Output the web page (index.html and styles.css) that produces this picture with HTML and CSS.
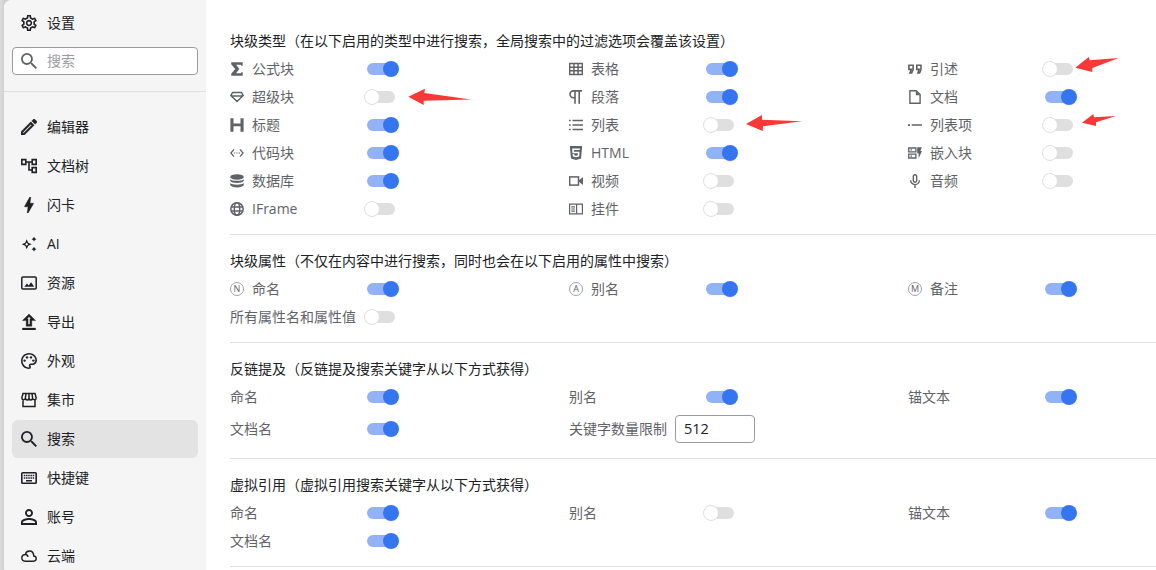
FILE: index.html
```
<!DOCTYPE html>
<html lang="zh-CN">
<head>
<meta charset="utf-8">
<title>设置</title>
<link rel="stylesheet" href="styles.css">
</head>
<body>
<svg class="sprite">
    <symbol id="iconSettings" viewBox="2 2 20 20"><path d="M19.43 12.98c.04-.32.07-.64.07-.98s-.03-.66-.07-.98l2.11-1.65c.19-.15.24-.42.12-.64l-2-3.46c-.09-.16-.26-.25-.44-.25-.06 0-.12.01-.17.03l-2.49 1c-.52-.4-1.08-.73-1.69-.98l-.38-2.65C14.46 2.18 14.25 2 14 2h-4c-.25 0-.46.18-.49.42l-.38 2.65c-.61.25-1.17.59-1.69.98l-2.49-1c-.06-.02-.12-.03-.18-.03-.17 0-.34.09-.43.25l-2 3.46c-.13.22-.07.49.12.64l2.11 1.65c-.04.32-.07.65-.07.98s.03.66.07.98l-2.11 1.65c-.19.15-.24.42-.12.64l2 3.46c.09.16.26.25.44.25.06 0 .12-.01.17-.03l2.49-1c.52.4 1.08.73 1.69.98l.38 2.65c.03.24.24.42.49.42h4c.25 0 .46-.18.49-.42l.38-2.65c.61-.25 1.17-.59 1.69-.98l2.49 1c.06.02.12.03.18.03.17 0 .34-.09.43-.25l2-3.46c.12-.22.07-.49-.12-.64l-2.11-1.65zm-1.98-1.71c.04.31.05.52.05.73 0 .21-.02.43-.05.73l-.14 1.13.89.7 1.08.84-.7 1.21-1.27-.51-1.04-.42-.9.68c-.43.32-.84.56-1.25.73l-1.06.43-.16 1.13-.2 1.35h-1.4l-.19-1.35-.16-1.13-1.06-.43c-.43-.18-.83-.41-1.23-.71l-.91-.7-1.06.43-1.27.51-.7-1.21 1.08-.84.89-.7-.14-1.13c-.03-.31-.05-.54-.05-.74s.02-.43.05-.73l.14-1.13-.89-.7-1.08-.84.7-1.21 1.27.51 1.04.42.9-.68c.43-.32.84-.56 1.25-.73l1.06-.43.16-1.13.2-1.35h1.39l.19 1.35.16 1.13 1.06.43c.43.18.83.41 1.23.71l.91.7 1.06-.43 1.27-.51.7 1.21-1.07.85-.89.7.14 1.13zM12 8c-2.21 0-4 1.79-4 4s1.79 4 4 4 4-1.79 4-4-1.79-4-4-4zm0 6c-1.1 0-2-.9-2-2s.9-2 2-2 2 .9 2 2-.9 2-2 2z"/></symbol>
    <symbol id="iconSearch" viewBox="3 3 17.5 17.5"><path d="M15.5 14h-.79l-.28-.27A6.471 6.471 0 0 0 16 9.5 6.5 6.5 0 1 0 9.5 16c1.61 0 3.09-.59 4.23-1.57l.27.28v.79l5 4.99L20.49 19l-4.99-5zm-6 0C7.01 14 5 11.99 5 9.5S7.01 5 9.5 5 14 7.01 14 9.5 11.99 14 9.5 14z"/></symbol>
    <symbol id="iconEdit" viewBox="3 3 18 18"><path stroke="currentColor" stroke-width=".5" d="M14.06 9.02l.92.92L5.92 19H5v-.92l9.06-9.06M17.66 3c-.25 0-.51.1-.7.29l-1.83 1.83 3.75 3.75 1.83-1.83c.39-.39.39-1.02 0-1.41l-2.34-2.34c-.2-.2-.45-.29-.71-.29zm-3.6 3.19L3 17.25V21h3.75L17.81 9.94l-3.75-3.75z"/></symbol>
    <symbol id="iconTree" viewBox="2 2 20 20"><path d="M22 11V3h-7v3H9V3H2v8h7V8h2v10h4v3h7v-8h-7v3h-2V8h2v3h7zM7 9H4V5h3v4zm10 6h3v4h-3v-4zm0-10h3v4h-3V5z"/></symbol>
    <symbol id="iconBolt" viewBox="3 3 18 18"><path stroke="currentColor" stroke-width=".6" d="M11 21h-1l1-7H7.5c-.58 0-.57-.32-.38-.66C8.48 10.94 10.42 7.54 13 3h1l-1 7h3.5c.49 0 .56.33.47.51C12.96 17.55 11 21 11 21z"/></symbol>
    <symbol id="iconSparkles" viewBox="0 0 16 16"><path fill-rule="evenodd" d="M5.7 3.2 7.2 6.7 10.7 8.2 7.2 9.7 5.7 13.2 4.2 9.7.7 8.2 4.2 6.7zM5.700 6.700 4.200 8.200 5.700 9.700 7.200 8.200z"/><path d="M13 .8l.9 1.500 1.500.9-1.500.9-.9 1.500-.9-1.500-1.500-.9 1.500-.9zM13 10.800l.9 1.500 1.500.9-1.500.9-.9 1.500-.9-1.500-1.500-.9 1.500-.9z"/></symbol>
    <symbol id="iconImage" viewBox="0 0 16 16"><rect x=".8" y="2.100" width="14.400" height="11.900" rx="1" fill="none" stroke="currentColor" stroke-width="1.500"/><path d="M3.300 11.800 6 8.500l1.700 2 2.400-3.200 3.100 4.500z"/></symbol>
    <symbol id="iconExport" viewBox="3.500 3 17 17"><path stroke="currentColor" stroke-width=".4" d="M5 20h14v-2H5v2zm0-10h4v6h6v-6h4l-7-7-7 7zm8-2v6h-2V8H9.830L12 5.830 14.170 8H13z"/></symbol>
    <symbol id="iconPalette" viewBox="2 2 20 20"><path d="M12 22C6.490 22 2 17.510 2 12S6.490 2 12 2s10 4.040 10 9c0 3.310-2.690 6-6 6h-1.770c-.28 0-.5.22-.5.5 0 .12.05.23.13.33.41.47.64 1.060.64 1.670A2.500 2.500 0 0 1 12 22zm0-18c-4.410 0-8 3.590-8 8s3.590 8 8 8c.28 0 .5-.22.5-.5a.54.54 0 0 0-.14-.35c-.41-.46-.63-1.050-.63-1.650a2.500 2.500 0 0 1 2.500-2.500H16c2.210 0 4-1.790 4-4 0-3.860-3.590-7-8-7z"/><circle cx="6.500" cy="11.500" r="1.500"/><circle cx="9.500" cy="7.500" r="1.500"/><circle cx="14.500" cy="7.500" r="1.500"/><circle cx="17.500" cy="11.500" r="1.500"/></symbol>
    <symbol id="iconStore" viewBox="0 0 16 16"><path d="M2 1.500h12l1.200 4.300c0 2.500-3.400 2.700-3.600.2 0 2.500-3.600 2.500-3.600 0 0 2.500-3.600 2.500-3.600 0C4.200 8.500.8 8.300.8 5.800zM2 7.800v6.700h12V7.800M5 1.500 4.400 6M8 1.500V6M11 1.500l.6 4.500" fill="none" stroke="currentColor" stroke-width="1.500"/></symbol>
    <symbol id="iconKeyboard" viewBox="0 0 16 16"><rect x=".8" y="2.800" width="14.400" height="10.400" rx=".8" fill="none" stroke="currentColor" stroke-width="1.600"/><path d="M2.800 5.500h10.400M2.800 8h10.400" fill="none" stroke="currentColor" stroke-width="1.600" stroke-dasharray="1.500 .72"/><path d="M5 10h6v1.500H5z"/></symbol>
    <symbol id="iconAccount" viewBox="4 4 16 16"><path d="M12 5.900c1.160 0 2.100.94 2.100 2.100s-.94 2.100-2.100 2.100S9.900 9.160 9.900 8s.94-2.100 2.100-2.100m0 9c2.970 0 6.100 1.460 6.100 2.100v1.100H5.900V17c0-.64 3.130-2.100 6.100-2.100M12 4C9.790 4 8 5.790 8 8s1.790 4 4 4 4-1.790 4-4-1.790-4-4-4zm0 9c-2.670 0-8 1.340-8 4v3h16v-3c0-2.660-5.330-4-8-4z"/></symbol>
    <symbol id="iconCloud" viewBox="0 0 16 16"><path d="M7 9c-.3-1.800-1.500-2.700-3-2.500C2.200 6.700.8 8 .8 9.800c0 2 1.500 3.400 3.500 3.400h8.200c1.500 0 2.700-1.100 2.700-2.600s-1-2.400-2.500-2.600c0-3-1.700-5-4.300-5-1.900 0-3.400 1.200-4 3" fill="none" stroke="currentColor" stroke-width="1.400"/></symbol>

    <symbol id="iconMath" viewBox="0 0 14 14"><path d="M1.200.2h11.500v3.500h-1.400l-.5-.9H6.200L9.300 7l-3.200 4.200h4.700l.6-1h1.300v3.600H1.200v-2L5.200 7 1.200 2.200z"/></symbol>
    <symbol id="iconSuper" viewBox="0 0 14 14"><path d="M2.600 2.400h8.800l1.800 3.100L7 11.500.8 5.500zM1 5.900h12" fill="none" stroke="currentColor" stroke-width="1.500"/></symbol>
    <symbol id="iconHeading" viewBox="0 0 14 14"><path d="M.4.2h3.100v5.200h7V.2h3.100v13.600h-3.100V8.200h-7v5.600H.4z"/></symbol>
    <symbol id="iconCode" viewBox="0 0 14 14"><path d="M4 3.400.9 7 4 10.600M10 3.400 13.100 7 10 10.600" fill="none" stroke="currentColor" stroke-width="1.300"/><path d="M4 6.400h1.200v1.200H4zM6.400 6.400h1.200v1.200H6.400zM8.800 6.400H10v1.200H8.800z"/></symbol>
    <symbol id="iconDatabase" viewBox="0 0 14 14"><ellipse cx="7" cy="3" rx="6.800" ry="2.700"/><path d="M.2 5.200c1.800 2.200 11.800 2.200 13.600 0v1.500c-1 2.900-12.600 2.900-13.600 0zM.2 9.100c1.800 2.200 11.800 2.200 13.600 0v1.900c-1 3.300-12.600 3.300-13.600 0z"/></symbol>
    <symbol id="iconGlobe" viewBox="0 0 14 14"><g fill="none" stroke="currentColor" stroke-width="1.500"><circle cx="7" cy="7" r="6.200"/><ellipse cx="7" cy="7" rx="2.700" ry="6.200"/><path d="M1 4.900h12M1 9.100h12"/></g></symbol>
    <symbol id="iconTable" viewBox="0 0 14 14"><path d="M.7 1.600h12.600v10.800H.7zM.7 5.200h12.600M.7 8.800h12.600M4.900 1.600v10.800M9.100 1.600v10.800" fill="none" stroke="currentColor" stroke-width="1.500"/></symbol>
    <symbol id="iconParagraph" viewBox="0 0 14 14"><path d="M13 .9H4.400a3.400 3.400 0 0 0 0 6.800h1.400M6 .9v12.900M10.200.9v12.900" fill="none" stroke="currentColor" stroke-width="1.600"/></symbol>
    <symbol id="iconList" viewBox="0 0 14 14"><path d="M0 1.700h1.700v1.600H0zM0 6.200h1.700v1.600H0zM0 10.700h1.700v1.600H0zM3.500 1.800H14v1.400H3.500zM3.500 6.300H14v1.400H3.500zM3.500 10.800H14v1.400H3.500z"/></symbol>
    <symbol id="iconHTML5" viewBox="3 3 18 18"><path fill-rule="evenodd" d="M12 17.560l4.070-1.130.55-6.100H9.380L9.200 8.300h7.600l.2-1.990H7l.56 6.010h6.890l-.23 2.580-2.220.6-2.220-.6-.14-1.660h-2l.29 3.190L12 17.560M4.070 3h15.860L18.500 19.200 12 21l-6.500-1.800L4.070 3z"/></symbol>
    <symbol id="iconVideo" viewBox="0 0 14 14"><rect x=".7" y="2.900" width="8.800" height="8.200" fill="none" stroke="currentColor" stroke-width="1.500"/><path d="M10 6.200 14 3v8l-4-3.200z"/></symbol>
    <symbol id="iconWidget" viewBox="0 0 14 14"><path d="M.6 2.100h12.800v9.800H.6zM7.600 2.100v9.800M2.300 4.900h3.600M2.300 7h3.600M2.300 9.100h3.600" fill="none" stroke="currentColor" stroke-width="1.200"/></symbol>
    <symbol id="iconQuote" viewBox="0 0 14 14"><path d="M.9 3.200h4.200v4.500L3.700 10.900H2l1.300-3.500H.9zM8.800 3.200H13v4.500l-1.400 3.200H9.900l1.300-3.500H8.800z" fill="none" stroke="currentColor" stroke-width="1.600"/></symbol>
    <symbol id="iconFile" viewBox="0 0 14 14"><path d="M1.900.8h6.400L12.100 4.600v8.600H1.900z" fill="none" stroke="currentColor" stroke-width="1.400"/><path d="M7.800.800 12.100 5.300H7.800z"/></symbol>
    <symbol id="iconListItem" viewBox="0 0 14 14"><path d="M0 6.200h2v1.700H0zM3.700 6.300H14v1.400H3.700z"/></symbol>
    <symbol id="iconEmbed" viewBox="0 0 14 14"><path d="M.7 2h7.200v3.800H.7zM.7 8.200h7.200V12H.7zM2.500 3.900H4M2.500 10.100H4" fill="none" stroke="currentColor" stroke-width="1.300"/><path d="M9.200 1.300h4.600l-1.400 3.600H14l-3.400 7.400V7.200H9.200z"/></symbol>
    <symbol id="iconMic" viewBox="0 0 14 14"><path d="M7 .7a1.700 1.700 0 0 0-1.700 1.700v4.200a1.700 1.700 0 0 0 3.400 0V2.400A1.700 1.700 0 0 0 7 .7zM2.600 6.200a4.400 4.400 0 0 0 8.800 0M7 10.700V14" fill="none" stroke="currentColor" stroke-width="1.400"/></symbol>
</svg>

<div class="dialog">
    <div class="sidebar">
        <div class="sidebar-title"><svg class="icon"><use href="#iconSettings"/></svg>设置</div>
        <div class="search-box"><svg class="icon"><use href="#iconSearch"/></svg>搜索</div>
        <div class="menu">
            <div class="menu-item"><svg class="icon"><use href="#iconEdit"/></svg>编辑器</div>
            <div class="menu-item"><svg class="icon"><use href="#iconTree"/></svg>文档树</div>
            <div class="menu-item"><svg class="icon"><use href="#iconBolt"/></svg>闪卡</div>
            <div class="menu-item"><svg class="icon"><use href="#iconSparkles"/></svg>AI</div>
            <div class="menu-item"><svg class="icon"><use href="#iconImage"/></svg>资源</div>
            <div class="menu-item"><svg class="icon"><use href="#iconExport"/></svg>导出</div>
            <div class="menu-item"><svg class="icon"><use href="#iconPalette"/></svg>外观</div>
            <div class="menu-item"><svg class="icon"><use href="#iconStore"/></svg>集市</div>
            <div class="menu-item active"><svg class="icon"><use href="#iconSearch"/></svg>搜索</div>
            <div class="menu-item"><svg class="icon"><use href="#iconKeyboard"/></svg>快捷键</div>
            <div class="menu-item"><svg class="icon"><use href="#iconAccount"/></svg>账号</div>
            <div class="menu-item"><svg class="icon"><use href="#iconCloud"/></svg>云端</div>
        </div>
    </div>

    <div class="content">
        <div class="section">
            <div class="section-title">块级类型（在以下启用的类型中进行搜索，全局搜索中的过滤选项会覆盖该设置）</div>
            <div class="grid">
                <div class="option"><span class="label"><svg><use href="#iconMath"/></svg>公式块</span><span class="switch on"></span></div>
                <div class="option"><span class="label"><svg><use href="#iconTable"/></svg>表格</span><span class="switch on"></span></div>
                <div class="option"><span class="label"><svg><use href="#iconQuote"/></svg>引述</span><span class="switch"></span></div>
                <div class="option"><span class="label"><svg><use href="#iconSuper"/></svg>超级块</span><span class="switch"></span></div>
                <div class="option"><span class="label"><svg><use href="#iconParagraph"/></svg>段落</span><span class="switch on"></span></div>
                <div class="option"><span class="label"><svg><use href="#iconFile"/></svg>文档</span><span class="switch on"></span></div>
                <div class="option"><span class="label"><svg><use href="#iconHeading"/></svg>标题</span><span class="switch on"></span></div>
                <div class="option"><span class="label"><svg><use href="#iconList"/></svg>列表</span><span class="switch"></span></div>
                <div class="option"><span class="label"><svg><use href="#iconListItem"/></svg>列表项</span><span class="switch"></span></div>
                <div class="option"><span class="label"><svg><use href="#iconCode"/></svg>代码块</span><span class="switch on"></span></div>
                <div class="option"><span class="label"><svg><use href="#iconHTML5"/></svg>HTML</span><span class="switch on"></span></div>
                <div class="option"><span class="label"><svg><use href="#iconEmbed"/></svg>嵌入块</span><span class="switch"></span></div>
                <div class="option"><span class="label"><svg><use href="#iconDatabase"/></svg>数据库</span><span class="switch on"></span></div>
                <div class="option"><span class="label"><svg><use href="#iconVideo"/></svg>视频</span><span class="switch"></span></div>
                <div class="option"><span class="label"><svg><use href="#iconMic"/></svg>音频</span><span class="switch"></span></div>
                <div class="option"><span class="label"><svg><use href="#iconGlobe"/></svg>IFrame</span><span class="switch"></span></div>
                <div class="option"><span class="label"><svg><use href="#iconWidget"/></svg>挂件</span><span class="switch"></span></div>
            </div>
        </div>

        <div class="section">
            <div class="section-title">块级属性（不仅在内容中进行搜索，同时也会在以下启用的属性中搜索）</div>
            <div class="grid">
                <div class="option"><span class="label"><span class="letter">N</span>命名</span><span class="switch on"></span></div>
                <div class="option"><span class="label"><span class="letter">A</span>别名</span><span class="switch on"></span></div>
                <div class="option"><span class="label"><span class="letter">M</span>备注</span><span class="switch on"></span></div>
                <div class="option"><span class="label">所有属性名和属性值</span><span class="switch"></span></div>
            </div>
        </div>

        <div class="section">
            <div class="section-title">反链提及（反链提及搜索关键字从以下方式获得）</div>
            <div class="grid">
                <div class="option"><span class="label">命名</span><span class="switch on"></span></div>
                <div class="option"><span class="label">别名</span><span class="switch on"></span></div>
                <div class="option"><span class="label">锚文本</span><span class="switch on"></span></div>
                <div class="option"><span class="label">文档名</span><span class="switch on"></span></div>
                <div class="option"><span>关键字数量限制</span><input class="number" type="text" value="512"></div>
            </div>
        </div>

        <div class="section">
            <div class="section-title">虚拟引用（虚拟引用搜索关键字从以下方式获得）</div>
            <div class="grid">
                <div class="option"><span class="label">命名</span><span class="switch on"></span></div>
                <div class="option"><span class="label">别名</span><span class="switch"></span></div>
                <div class="option"><span class="label">锚文本</span><span class="switch on"></span></div>
                <div class="option"><span class="label">文档名</span><span class="switch on"></span></div>
            </div>
        </div>
    </div>
</div>

<svg class="arrows" viewBox="0 0 1156 570">
    <path d="M408.300 96.700 425 88.700l-.7 4.300 46.700 6.400-47.300 1.300v4.300z"/>
    <path d="M746 124l16-9v4.700l40.300 1.600-39.300 5-.3 4.700z"/>
    <path d="M1075.300 67.700 1088.700 57l1 3.300 29-2.300-26.400 10v4z"/>
    <path d="M1082 122.700l11.300-8.700.7 3.300 22-1.300-20 6.300v3.700z"/>
</svg>
</body>
</html>
```

FILE: styles.css
```
*, *::after {
    box-sizing: border-box;
}

body {
    margin: 0;
    height: 570px;
    overflow: hidden;
    background: linear-gradient(to right, #dcdcdc, #d0d0d0 4px);
    font-family: "Open Sans", "Noto Sans CJK SC", sans-serif;
    font-size: 14px;
    line-height: 20px;
    color: #202124;
}

svg {
    fill: currentColor;
    flex-shrink: 0;
}

.sprite {
    display: none;
}

.dialog {
    display: flex;
    height: 570px;
    margin-left: 4px;
    background: #fff;
    border-top-left-radius: 8px;
    overflow: hidden;
}

.sidebar {
    width: 202px;
    flex-shrink: 0;
    background: #f5f5f5;
}

.icon {
    width: 16px;
    height: 16px;
    margin-right: 10px;
}

.sidebar-title {
    display: flex;
    align-items: center;
    height: 46px;
    margin-bottom: 1px;
    padding-left: 17px;
}

.search-box {
    display: flex;
    align-items: center;
    height: 28px;
    margin: 0 8px;
    padding-left: 8px;
    border: 1px solid #9a9b9d;
    border-radius: 4px;
    background: #fff;
    color: #9a9da1;
}

.search-box .icon {
    color: #5f6368;
}

.menu {
    margin-top: 16px;
    padding: 16px 8px 0;
    border-top: 1px solid #e0e0e0;
}

.menu-item {
    display: flex;
    align-items: center;
    height: 38px;
    margin-bottom: 1px;
    padding-left: 9px;
    border-radius: 6px;
}

.menu-item.active {
    background: #e3e3e3;
}

.content {
    flex: 1;
    padding: 15px 0 0 26px;
}

.section {
    margin-left: -1px;
    padding: 12px 0 11px;
    border-bottom: 1px solid #e0e0e0;
}

.section-title {
    height: 28px;
    line-height: 28px;
}

.content {
    padding-left: 25px;
}

.grid {
    display: grid;
    grid-template-columns: repeat(3, 339px);
    color: #5f6368;
}

.option {
    display: flex;
    align-items: center;
    min-height: 28px;
}

.label {
    display: flex;
    align-items: center;
    width: 126px;
    margin-right: 11px;
    white-space: nowrap;
}

.label svg {
    width: 14px;
    height: 14px;
    margin-right: 8px;
}

.letter {
    width: 14px;
    height: 14px;
    margin-right: 8px;
    border: 1px solid #a0a3a6;
    border-radius: 50%;
    font-size: 9px;
    line-height: 12px;
    text-align: center;
}

.switch {
    position: relative;
    width: 28px;
    height: 12px;
    border-radius: 6px;
    background: #dfdfdf;
}

.switch::after {
    content: "";
    position: absolute;
    top: -2px;
    left: -3px;
    width: 16px;
    height: 16px;
    border: 1px solid #dfdfdf;
    border-radius: 50%;
    background: #fff;
}

.switch.on {
    background: #92b2f7;
}

.switch.on::after {
    left: 16px;
    border: none;
    background: #3575f0;
}

.number {
    width: 80px;
    height: 28px;
    margin: 4px 0 4px 8px;
    padding: 0 8px 2px;
    border: 1px solid #9a9b9d;
    border-radius: 4px;
    font: inherit;
    font-size: 14.5px;
    color: #202124;
}

.arrows {
    position: absolute;
    top: 0;
    left: 0;
    width: 1156px;
    height: 570px;
    fill: #fb3838;
    pointer-events: none;
}
```
